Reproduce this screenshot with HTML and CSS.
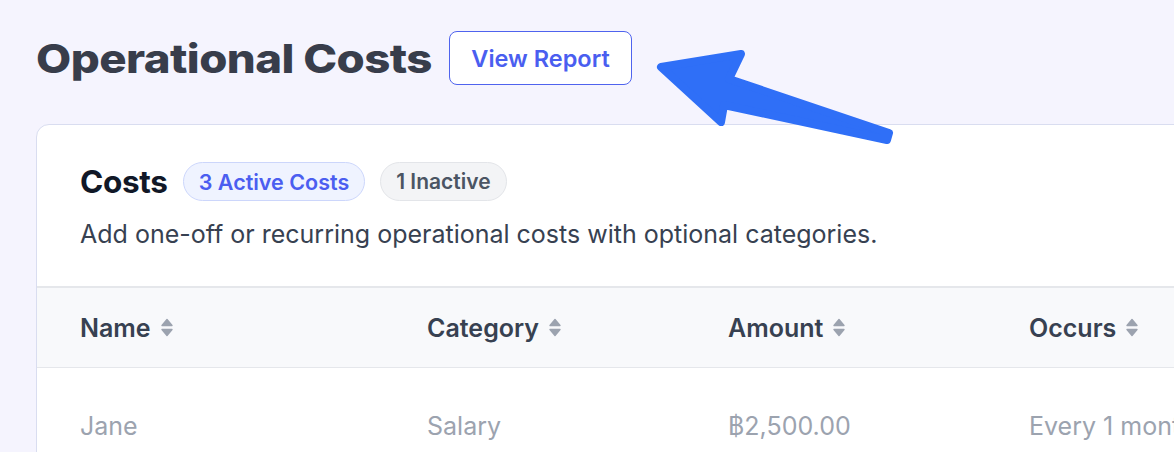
FILE: index.html
```html
<!DOCTYPE html>
<html>
<head>
<meta charset="utf-8">
<link rel="stylesheet" href="styles.css">
</head>
<body>
<div class="page">
  <header class="page-head">
    <h1 class="page-title"><span>Operational Costs</span></h1>
    <button class="btn-outline">View Report</button>
  </header>
  <section class="card">
    <div class="card-head">
      <div class="card-title-row">
        <h2 class="card-title">Costs</h2>
        <span class="badge badge-indigo">3 Active Costs</span>
        <span class="badge badge-gray">1 Inactive</span>
      </div>
      <p class="card-desc">Add one-off or recurring operational costs with optional categories.</p>
    </div>
    <div class="table">
      <div class="tr th-row">
        <div class="th">Name <svg class="sort" viewBox="0 0 14 19"><path d="M7 1.5 L12 7.5 H2 Z M7 17.5 L12 11.5 H2 Z" fill="#9ca3af" stroke="#9ca3af" stroke-width="1.4" stroke-linejoin="round"/></svg></div>
        <div class="th">Category <svg class="sort" viewBox="0 0 14 19"><path d="M7 1.5 L12 7.5 H2 Z M7 17.5 L12 11.5 H2 Z" fill="#9ca3af" stroke="#9ca3af" stroke-width="1.4" stroke-linejoin="round"/></svg></div>
        <div class="th">Amount <svg class="sort" viewBox="0 0 14 19"><path d="M7 1.5 L12 7.5 H2 Z M7 17.5 L12 11.5 H2 Z" fill="#9ca3af" stroke="#9ca3af" stroke-width="1.4" stroke-linejoin="round"/></svg></div>
        <div class="th">Occurs <svg class="sort" viewBox="0 0 14 19"><path d="M7 1.5 L12 7.5 H2 Z M7 17.5 L12 11.5 H2 Z" fill="#9ca3af" stroke="#9ca3af" stroke-width="1.4" stroke-linejoin="round"/></svg></div>
      </div>
      <div class="tr td-row">
        <div class="td">Jane</div>
        <div class="td">Salary</div>
        <div class="td">฿2,500.00</div>
        <div class="td">Every 1 month</div>
      </div>
    </div>
  </section>
  <svg class="arrow" viewBox="0 0 260 100" width="260" height="100">
    <path d="M5 21 L85 8 L73 33 L233 87 L231 94 L68 59 L65 76 Z" fill="#2f6ff7" stroke="#2f6ff7" stroke-width="8" stroke-linejoin="round"/>
  </svg>
</div>
</body>
</html>
```
FILE: styles.css
```css
* { box-sizing: border-box; }
html, body { margin: 0; padding: 0; }
body {
  background: #f5f4fe;
  font-family: Inter, "Noto Sans", sans-serif;
  width: 1174px;
  height: 452px;
  overflow: hidden;
}
.page {
  position: relative;
  padding: 31px 0 0 36px;
}
.page-head {
  display: flex;
  align-items: center;
  gap: 18px;
  height: 54px;
}
.page-title {
  margin: 0;
  font-size: 40px;
  font-weight: 800;
  color: #383d4b;
  letter-spacing: -0.5px;
  width: 395px;
}
.page-title span {
  display: inline-block;
  transform: scaleX(1.14);
  transform-origin: left center;
}
.btn-outline {
  height: 54px;
  width: 183px;
  border: 1px solid #4f63ee;
  border-radius: 8px;
  background: #fff;
  color: #4a5ef0;
  font-family: Inter, sans-serif;
  font-size: 23.5px;
  font-weight: 600;
  padding: 0;
}
.card {
  margin-top: 39px;
  width: 1160px;
  background: #fff;
  border: 1px solid #d9ddf0;
  border-radius: 13px;
  overflow: hidden;
}
.card-head {
  padding: 37px 43px 37px;
}
.card-title-row {
  display: flex;
  align-items: center;
  gap: 15px;
  height: 39px;
}
.card-title {
  margin: 0;
  font-size: 31.5px;
  font-weight: 700;
  color: #111827;
  letter-spacing: -0.3px;
}
.badge {
  display: inline-flex;
  align-items: center;
  height: 39px;
  padding: 0 15px;
  border-radius: 20px;
  font-size: 21.5px;
  font-weight: 600;
}
.badge-indigo {
  background: #eff3ff;
  border: 1px solid #ccd6fb;
  color: #4b5ef0;
}
.badge-gray {
  background: #f3f4f6;
  border: 1px solid #e3e5e9;
  color: #4b5563;
  font-size: 21px;
}
.card-desc {
  margin: 18px 0 0;
  font-size: 25px;
  line-height: 30px;
  color: #374151;
}
.table {
  border-top: 2px solid #e5e7eb;
}
.tr {
  display: grid;
  grid-template-columns: 347px 301px 301px 301px;
  padding-left: 43px;
  align-items: center;
}
.th-row {
  height: 80px;
  background: #f8f9fb;
  border-bottom: 1px solid #e5e7eb;
}
.th {
  font-size: 25px;
  font-weight: 600;
  color: #374151;
  display: flex;
  align-items: center;
  gap: 9px;
}
.sort { width: 14px; height: 19px; }
.td-row { height: 116px; }
.td {
  font-size: 25px;
  color: #9ca3af;
  white-space: nowrap;
}
.arrow {
  position: absolute;
  left: 656px;
  top: 46px;
}
```
